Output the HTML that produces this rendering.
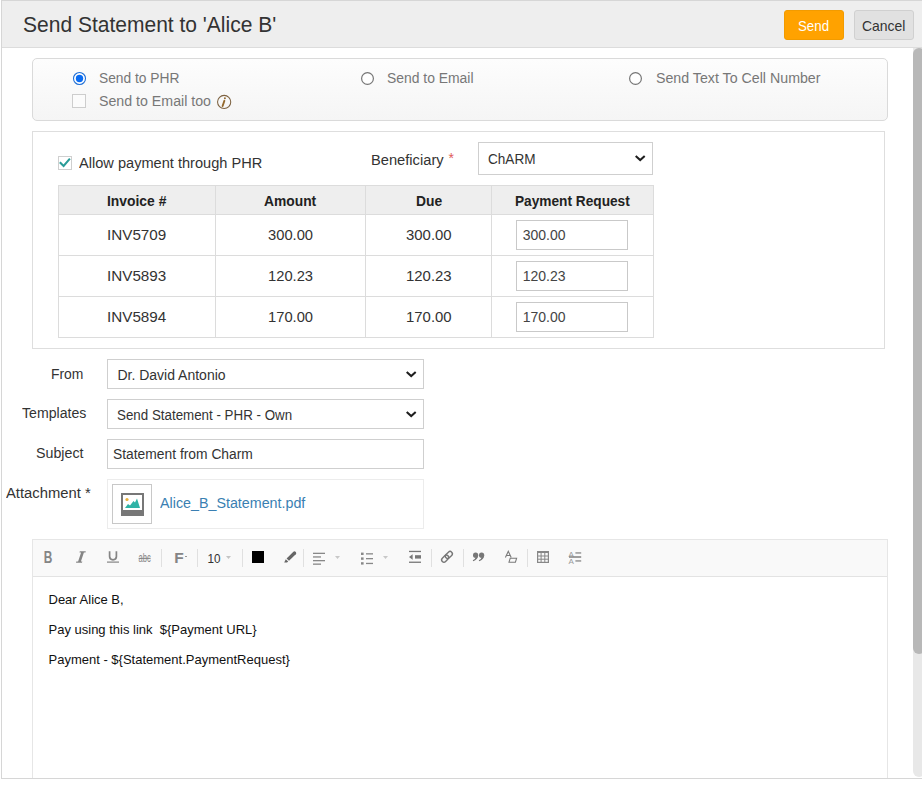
<!DOCTYPE html>
<html><head><meta charset="utf-8">
<style>
html,body{margin:0;padding:0;background:#fff;width:922px;height:787px;overflow:hidden;position:relative;font-family:"Liberation Sans",sans-serif;}
.a{position:absolute;box-sizing:border-box;}
.t{position:absolute;white-space:pre;line-height:1;transform-origin:0 0;font-family:"Liberation Sans",sans-serif;}
</style></head><body>
<!-- dialog frame -->
<div class="a" style="left:1px;top:0;width:921px;height:779px;border:1px solid #d6d6d6;border-right:none;"></div>
<!-- header -->
<div class="a" style="left:2px;top:1px;width:920px;height:47px;background:#eeeeee;border-bottom:1px solid #dcdcdc;"></div>
<div class="a" style="left:784px;top:10px;width:60px;height:30px;background:#ffa200;border:1px solid #f29b00;border-radius:3px;"></div>
<div class="a" style="left:854px;top:10px;width:60px;height:30px;background:#e1e1e1;border:1px solid #d0d0d0;border-radius:3px;"></div>
<!-- scrollbar -->
<div class="a" style="left:913px;top:48px;width:12px;height:729px;background:#e8e8e8;border-radius:0 0 6px 6px;"></div>
<div class="a" style="left:913px;top:48px;width:12px;height:606px;background:#b8b8b8;border-radius:6px;"></div>
<!-- box1 -->
<div class="a" style="left:32px;top:58px;width:856px;height:63px;border:1px solid #dadada;border-radius:5px;background:linear-gradient(#fdfdfd,#f5f5f5);"></div>
<!-- radios -->
<svg class="a" style="left:72px;top:71px" width="15" height="15" viewBox="0 0 15 15"><circle cx="7.5" cy="7.5" r="6" fill="#fff" stroke="#1f6fd6" stroke-width="1.1"/><circle cx="7.5" cy="7.5" r="3.7" fill="#0a6cf2"/></svg>
<svg class="a" style="left:360px;top:71px" width="15" height="15" viewBox="0 0 15 15"><circle cx="7.5" cy="7.5" r="5.9" fill="#fff" stroke="#767676" stroke-width="1.2"/></svg>
<svg class="a" style="left:628px;top:71px" width="15" height="15" viewBox="0 0 15 15"><circle cx="7.5" cy="7.5" r="5.9" fill="#fff" stroke="#767676" stroke-width="1.2"/></svg>
<div class="a" style="left:72px;top:94px;width:14px;height:14px;border:1px solid #cdcdcd;background:#fbfbfb;"></div>
<!-- info icon -->
<svg class="a" style="left:216px;top:94px" width="16" height="16" viewBox="0 0 16 16"><circle cx="8.15" cy="7.95" r="6.6" fill="none" stroke="#7d6240" stroke-width="1.05"/><circle cx="8.9" cy="4.3" r="0.95" fill="#94692e"/><path d="M8.4 6.8 L6.6 12" stroke="#94692e" stroke-width="1.9" stroke-linecap="round"/></svg>
<!-- box2 -->
<div class="a" style="left:32px;top:131px;width:853px;height:218px;border:1px solid #dedede;background:#fff;"></div>
<div class="a" style="left:58px;top:156px;width:14px;height:14px;border:1px solid #cfcfcf;background:#fff;"></div>
<svg class="a" style="left:58px;top:156px" width="14" height="14" viewBox="0 0 14 14"><path d="M1.8 6.2 L5.6 9.9 L11.9 2.6" fill="none" stroke="#2a9c98" stroke-width="2.1"/></svg>
<span class="a" style="left:448.5px;top:151px;font-size:14px;line-height:14px;color:#e05a5a;font-family:'Liberation Sans';">*</span>
<div class="a" style="left:478px;top:142px;width:175px;height:33px;border:1px solid #cfcfcf;background:#fff;"></div>
<svg class="a" style="left:634px;top:154px" width="13" height="8" viewBox="0 0 13 8"><path d="M1.7 1.9 L6.2 6.1 L10.7 1.9" fill="none" stroke="#1e1e1e" stroke-width="2.0"/></svg>
<!-- table -->
<div class="a" style="left:58px;top:185px;width:596px;height:153px;border:1px solid #dcdcdc;background:#fff;"></div>
<div class="a" style="left:59px;top:186px;width:594px;height:28px;background:#eeeeee;"></div>
<div class="a" style="left:59px;top:214px;width:594px;height:1px;background:#dcdcdc;"></div>
<div class="a" style="left:59px;top:255px;width:594px;height:1px;background:#dcdcdc;"></div>
<div class="a" style="left:59px;top:296px;width:594px;height:1px;background:#dcdcdc;"></div>
<div class="a" style="left:215px;top:186px;width:1px;height:151px;background:#dcdcdc;"></div>
<div class="a" style="left:365px;top:186px;width:1px;height:151px;background:#dcdcdc;"></div>
<div class="a" style="left:491px;top:186px;width:1px;height:151px;background:#dcdcdc;"></div>
<div class="a" style="left:516px;top:220px;width:112px;height:30px;border:1px solid #c9c9c9;background:#fff;"></div>
<div class="a" style="left:516px;top:261px;width:112px;height:30px;border:1px solid #c9c9c9;background:#fff;"></div>
<div class="a" style="left:516px;top:302px;width:112px;height:30px;border:1px solid #c9c9c9;background:#fff;"></div>
<!-- form -->
<div class="a" style="left:107px;top:359px;width:317px;height:30px;border:1px solid #cfcfcf;background:#fff;"></div>
<svg class="a" style="left:405px;top:370px" width="13" height="8" viewBox="0 0 13 8"><path d="M1.7 1.9 L6.2 6.1 L10.7 1.9" fill="none" stroke="#1e1e1e" stroke-width="2.0"/></svg>
<div class="a" style="left:107px;top:399px;width:317px;height:30px;border:1px solid #cfcfcf;background:#fff;"></div>
<svg class="a" style="left:405px;top:410px" width="13" height="8" viewBox="0 0 13 8"><path d="M1.7 1.9 L6.2 6.1 L10.7 1.9" fill="none" stroke="#1e1e1e" stroke-width="2.0"/></svg>
<div class="a" style="left:107px;top:439px;width:317px;height:30px;border:1px solid #cfcfcf;background:#fff;"></div>
<div class="a" style="left:107px;top:479px;width:317px;height:50px;border:1px solid #ececec;background:#fff;"></div>
<div class="a" style="left:112px;top:484px;width:40px;height:40px;border:1px solid #c8c8c8;background:#fff;"></div>
<svg class="a" style="left:121px;top:493px" width="23" height="23" viewBox="0 0 23 23"><rect x="0" y="0" width="23" height="23" fill="#777"/><rect x="2" y="2" width="19" height="15" fill="#fff"/><circle cx="6" cy="6.5" r="1.6" fill="#e9b13a"/><path d="M4 15 L7 11 L9 12.5 L12.5 8 L14 9.5 L16 5.5 L19 15 Z" fill="#2fb3a6"/></svg>
<!-- editor -->
<div class="a" style="left:32px;top:539px;width:856px;height:239px;border:1px solid #e6e6e6;border-bottom:none;background:#fff;"></div>
<div class="a" style="left:33px;top:540px;width:854px;height:37px;background:#f9f9f9;border-bottom:1px solid #e3e3e3;"></div>
<svg class="a" style="left:0;top:0" width="922" height="787" viewBox="0 0 922 787">
 <g fill="#e0e0e0">
  <rect x="161" y="549" width="1" height="18"/>
  <rect x="197" y="549" width="1" height="18"/>
  <rect x="242" y="549" width="1" height="18"/>
  <rect x="303" y="549" width="1" height="18"/>
  <rect x="431" y="549" width="1" height="18"/>
  <rect x="463" y="549" width="1" height="18"/>
  <rect x="527" y="549" width="1" height="18"/>
 </g>
 <!-- B -->
 <text x="43.8" y="562.8" font-family="Liberation Sans" font-weight="bold" font-size="16" fill="#858585" textLength="8.6" lengthAdjust="spacingAndGlyphs">B</text>
 <!-- I -->
 <path d="M79.8 551.2 H85.8 L85.5 552.6 H83.9 L80.9 561.4 H82.3 L82 562.8 H76 L76.3 561.4 H78.1 L81.1 552.6 H79.5 Z" fill="#858585"/>
 <!-- U -->
 <path d="M109.6 551.2 V556.6 Q109.6 559.8 113 559.8 Q116.4 559.8 116.4 556.6 V551.2" fill="none" stroke="#858585" stroke-width="1.7"/>
 <rect x="107" y="561.5" width="12" height="1.2" fill="#858585"/>
 <!-- abc strike -->
 <text x="138.6" y="562" font-family="Liberation Sans" font-size="13" fill="#8a8a8a" textLength="12.2" lengthAdjust="spacingAndGlyphs">abc</text>
 <rect x="138.6" y="557.8" width="12" height="1.1" fill="#858585"/>
 <!-- F -->
 <text x="174.3" y="562.9" font-family="Liberation Sans" font-weight="bold" font-size="15.5" fill="#858585">F</text>
 <rect x="185" y="556" width="2" height="1" fill="#999"/>
 <!-- 10 -->
 <text x="207.4" y="562.9" font-family="Liberation Sans" font-size="13.6" fill="#333" textLength="13" lengthAdjust="spacingAndGlyphs">10</text>
 <path d="M226 556 H231 L228.5 559 Z" fill="#c4c4c4"/>
 <!-- color square -->
 <rect x="252" y="551" width="12" height="12" fill="#000"/>
 <!-- pen -->
 <path d="M286.6 558.4 L293.4 551.8 Q294.6 550.8 295.8 552 Q296.8 553.2 295.8 554.3 L289 560.8 Z" fill="#666"/>
 <path d="M285.8 559.3 L288.2 561.6 L287 562.6 L284.2 562.6 Z" fill="#666"/>
 <!-- align left -->
 <g fill="#888">
  <rect x="313" y="552.7" width="12" height="1.3"/>
  <rect x="313" y="556.3" width="8" height="1.3"/>
  <rect x="313" y="560" width="12" height="1.3"/>
  <rect x="313" y="563.5" width="8" height="1.3"/>
 </g>
 <path d="M335 556 H340 L337.5 559 Z" fill="#c8c8c8"/>
 <!-- list -->
 <g fill="#888">
  <rect x="361" y="552.6" width="2.6" height="2.4"/>
  <rect x="361" y="557.4" width="2.6" height="2.4"/>
  <rect x="361" y="562.2" width="2.6" height="2.4"/>
  <rect x="366" y="553.2" width="7" height="1.3"/>
  <rect x="366" y="558" width="7" height="1.3"/>
  <rect x="366" y="562.8" width="7" height="1.3"/>
 </g>
 <path d="M383 556 H388 L385.5 559 Z" fill="#c8c8c8"/>
 <!-- outdent -->
 <g fill="#777">
  <rect x="409" y="550.8" width="12" height="1.3"/>
  <rect x="409" y="561.6" width="12" height="1.3"/>
  <path d="M409 557 L412.6 554.3 V559.7 Z"/>
  <rect x="415" y="555.2" width="6" height="3.4"/>
 </g>
 <!-- link -->
 <g fill="none" stroke="#777" stroke-width="1.4" transform="rotate(-45 447 556.8)">
  <rect x="440.4" y="554.5" width="8" height="4.6" rx="2.3"/>
  <rect x="445.6" y="554.5" width="8" height="4.6" rx="2.3"/>
 </g>
 <!-- quote -->
 <g fill="#777">
  <circle cx="475.6" cy="555.2" r="2.6"/>
  <path d="M477.9 556 Q477.9 559.6 473.2 561.2 L472.8 560.3 Q475.6 559 475.8 556.6 Z"/>
  <circle cx="481.6" cy="555.2" r="2.6"/>
  <path d="M483.9 556 Q483.9 559.6 479.2 561.2 L478.8 560.3 Q481.6 559 481.8 556.6 Z"/>
 </g>
 <!-- clear format -->
 <path d="M505.4 557.6 L508.3 551.3 L511.2 557.6 M506.5 555.5 H510.1" fill="none" stroke="#7a7a7a" stroke-width="1.1"/>
 <path d="M510.2 558.3 H516.6 L515.4 562.2 H509 Z" fill="none" stroke="#7a7a7a" stroke-width="1.1"/>
 <!-- table -->
 <g fill="#888">
  <rect x="537" y="551" width="12" height="2"/>
  <rect x="537" y="551" width="1.2" height="12"/>
  <rect x="547.8" y="551" width="1.2" height="12"/>
  <rect x="537" y="561.8" width="12" height="1.2"/>
  <rect x="537" y="555.5" width="12" height="1"/>
  <rect x="537" y="558.7" width="12" height="1"/>
  <rect x="540.6" y="551" width="1" height="12"/>
  <rect x="544.3" y="551" width="1" height="12"/>
 </g>
 <!-- line height -->
 <g fill="#888">
  <text x="568.6" y="557" font-family="Liberation Sans" font-size="8" fill="#999">A</text>
  <text x="568.6" y="563.6" font-family="Liberation Sans" font-size="8" fill="#999">A</text>
  <rect x="575.4" y="552.3" width="5.8" height="1.3"/>
  <rect x="569" y="556.2" width="12.2" height="1.6"/>
  <rect x="575.4" y="560.3" width="5.8" height="1.3"/>
 </g>
</svg>

<span class="t" style="left:23.20px;top:13.61px;font-size:22px;color:#333;transform:scaleX(0.9549);">Send Statement to 'Alice B'</span>
<span class="t" style="left:798.00px;top:18.22px;font-size:15px;color:#fff;transform:scaleX(0.8857);">Send</span>
<span class="t" style="left:862.20px;top:17.62px;font-size:15px;color:#333;transform:scaleX(0.9305);">Cancel</span>
<span class="t" style="left:98.90px;top:71.38px;font-size:14px;color:#777;transform:scaleX(0.9847);">Send to PHR</span>
<span class="t" style="left:98.90px;top:94.48px;font-size:14px;color:#777;transform:scaleX(1.0136);">Send to Email too</span>
<span class="t" style="left:387.20px;top:71.38px;font-size:14px;color:#777;transform:scaleX(0.9928);">Send to Email</span>
<span class="t" style="left:656.00px;top:71.38px;font-size:14px;color:#777;transform:scaleX(1.0146);">Send Text To Cell Number</span>
<span class="t" style="left:78.70px;top:156.38px;font-size:14px;color:#333;transform:scaleX(1.0422);">Allow payment through PHR</span>
<span class="t" style="left:370.90px;top:152.68px;font-size:14px;color:#333;transform:scaleX(1.0484);">Beneficiary</span>
<span class="t" style="left:488.00px;top:152.38px;font-size:14px;color:#333;transform:scaleX(0.9694);">ChARM</span>
<span class="t" style="left:107.00px;top:193.58px;font-size:14px;color:#222;font-weight:bold;transform:scaleX(0.9904);">Invoice #</span>
<span class="t" style="left:264.40px;top:193.58px;font-size:14px;color:#222;font-weight:bold;transform:scaleX(0.9872);">Amount</span>
<span class="t" style="left:415.50px;top:193.58px;font-size:14px;color:#222;font-weight:bold;transform:scaleX(0.9887);">Due</span>
<span class="t" style="left:515.00px;top:193.58px;font-size:14px;color:#222;font-weight:bold;transform:scaleX(0.9770);">Payment Request</span>
<span class="t" style="left:107.05px;top:228.28px;font-size:14px;color:#333;transform:scaleX(1.0881);">INV5709</span>
<span class="t" style="left:267.85px;top:228.28px;font-size:14px;color:#333;transform:scaleX(1.0519);">300.00</span>
<span class="t" style="left:405.65px;top:228.28px;font-size:14px;color:#333;transform:scaleX(1.0659);">300.00</span>
<span class="t" style="left:522.70px;top:228.28px;font-size:14px;color:#444;">300.00</span>
<span class="t" style="left:107.05px;top:269.28px;font-size:14px;color:#333;transform:scaleX(1.0881);">INV5893</span>
<span class="t" style="left:267.85px;top:269.28px;font-size:14px;color:#333;transform:scaleX(1.0519);">120.23</span>
<span class="t" style="left:405.65px;top:269.28px;font-size:14px;color:#333;transform:scaleX(1.0659);">120.23</span>
<span class="t" style="left:522.70px;top:269.28px;font-size:14px;color:#444;">120.23</span>
<span class="t" style="left:107.05px;top:310.28px;font-size:14px;color:#333;transform:scaleX(1.0881);">INV5894</span>
<span class="t" style="left:267.85px;top:310.28px;font-size:14px;color:#333;transform:scaleX(1.0519);">170.00</span>
<span class="t" style="left:405.65px;top:310.28px;font-size:14px;color:#333;transform:scaleX(1.0659);">170.00</span>
<span class="t" style="left:522.70px;top:310.28px;font-size:14px;color:#444;">170.00</span>
<span class="t" style="left:50.80px;top:366.58px;font-size:14px;color:#333;transform:scaleX(0.9931);">From</span>
<span class="t" style="left:22.30px;top:406.08px;font-size:14px;color:#333;transform:scaleX(1.0082);">Templates</span>
<span class="t" style="left:36.40px;top:445.88px;font-size:14px;color:#333;transform:scaleX(1.0160);">Subject</span>
<span class="t" style="left:5.60px;top:486.08px;font-size:14px;color:#333;transform:scaleX(1.0571);">Attachment *</span>
<span class="t" style="left:117.40px;top:368.08px;font-size:14px;color:#333;">Dr. David Antonio</span>
<span class="t" style="left:116.90px;top:407.78px;font-size:14px;color:#333;transform:scaleX(0.9536);">Send Statement - PHR - Own</span>
<span class="t" style="left:113.00px;top:446.78px;font-size:14px;color:#333;transform:scaleX(0.9878);">Statement from Charm</span>
<span class="t" style="left:160.10px;top:495.88px;font-size:14px;color:#3a7fb2;transform:scaleX(1.0204);">Alice_B_Statement.pdf</span>
<span class="t" style="left:48.50px;top:593.34px;font-size:13px;color:#111;">Dear Alice B,</span>
<span class="t" style="left:48.50px;top:622.94px;font-size:13px;color:#111;">Pay using this link  ${Payment URL}</span>
<span class="t" style="left:48.50px;top:652.54px;font-size:13px;color:#111;">Payment - ${Statement.PaymentRequest}</span>
</body></html>
